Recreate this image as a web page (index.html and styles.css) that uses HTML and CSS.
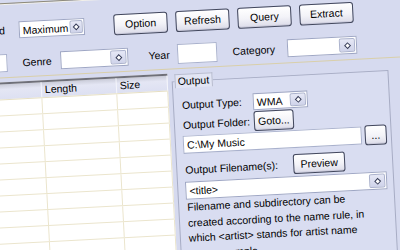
FILE: index.html
```html
<!DOCTYPE html>
<html lang="en">
<head>
  <meta charset="UTF-8" />
  <title>Audio Extractor</title>
  <link rel="stylesheet" href="styles.css">
</head>
<body>
  <div class="stage">
    <div class="toolbar">
      <div class="tool-row row-top">
        <span class="label label-speed">Speed</span>
        <div class="combo combo-quality">
          <span class="combo-text">Maximum</span>
          <span class="drop"><i></i></span>
        </div>
        <div class="buttons">
          <button class="btn btn-tool">Option</button>
          <button class="btn btn-tool">Refresh</button>
          <button class="btn btn-tool">Query</button>
          <button class="btn btn-tool">Extract</button>
        </div>
      </div>
      <div class="tool-row row-filter">
        <div class="textbox tb-artist"></div>
        <span class="label label-genre">Genre</span>
        <div class="combo combo-genre">
          <span class="combo-text"></span>
          <span class="drop"><i></i></span>
        </div>
        <span class="label label-year">Year</span>
        <div class="textbox tb-year"></div>
        <span class="label label-category">Category</span>
        <div class="combo combo-category">
          <span class="combo-text"></span>
          <span class="drop"><i></i></span>
        </div>
      </div>
    </div>

    <div class="main">
      <div class="list">
        <div class="list-head">
          <span class="cell col-title"></span>
          <span class="cell col-length">Length</span>
          <span class="cell col-size">Size</span>
        </div>
        <div class="list-body">
          <div class="list-row"><span class="cell col-title"></span><span class="cell col-length"></span><span class="cell col-size"></span></div>
          <div class="list-row"><span class="cell col-title"></span><span class="cell col-length"></span><span class="cell col-size"></span></div>
          <div class="list-row"><span class="cell col-title"></span><span class="cell col-length"></span><span class="cell col-size"></span></div>
          <div class="list-row"><span class="cell col-title"></span><span class="cell col-length"></span><span class="cell col-size"></span></div>
          <div class="list-row"><span class="cell col-title"></span><span class="cell col-length"></span><span class="cell col-size"></span></div>
          <div class="list-row"><span class="cell col-title"></span><span class="cell col-length"></span><span class="cell col-size"></span></div>
          <div class="list-row"><span class="cell col-title"></span><span class="cell col-length"></span><span class="cell col-size"></span></div>
          <div class="list-row"><span class="cell col-title"></span><span class="cell col-length"></span><span class="cell col-size"></span></div>
          <div class="list-row"><span class="cell col-title"></span><span class="cell col-length"></span><span class="cell col-size"></span></div>
          <div class="list-row"><span class="cell col-title"></span><span class="cell col-length"></span><span class="cell col-size"></span></div>
          <div class="list-row"><span class="cell col-title"></span><span class="cell col-length"></span><span class="cell col-size"></span></div>
          <div class="list-row"><span class="cell col-title"></span><span class="cell col-length"></span><span class="cell col-size"></span></div>
        </div>
      </div>

      <div class="group">
        <div class="legend">Output</div>
        <div class="field field-type">
          <span class="field-label">Output Type:</span>
          <div class="combo combo-type">
            <span class="combo-text">WMA</span>
            <span class="drop"><i></i></span>
          </div>
        </div>
        <div class="field field-folder">
          <span class="field-label">Output Folder:</span>
          <button class="btn btn-goto">Goto...</button>
        </div>
        <div class="field field-path">
          <div class="textbox tb-path">C:\My Music</div>
          <button class="btn btn-browse">...</button>
        </div>
        <div class="field field-name">
          <span class="field-label label-name">Output Filename(s):</span>
          <button class="btn btn-preview">Preview</button>
        </div>
        <div class="combo combo-name">
          <span class="combo-text">&lt;title&gt;</span>
          <span class="drop"><i></i></span>
        </div>
        <p class="hint">Filename and subdirectory can be<br>created according to the name rule, in<br>which &lt;artist&gt; stands for artist name<br>as an example.</p>
      </div>
    </div>
  </div>
</body>
</html>
```

FILE: styles.css
```css
html, body {
  margin: 0;
  padding: 0;
  overflow: hidden;
  background: #d6daef;
  color: #000;
  font-family: "Liberation Sans", Arial, sans-serif;
  font-size: 10.5px;
}

/* the whole window is photographed slightly tilted */
.stage {
  width: 460px;
  height: 320px;
  margin: -30px 0 0 -30px;
  padding: 30px;
  box-sizing: border-box;
  transform: rotate(-3deg);
  transform-origin: 230px 155px;
}

.toolbar {
  display: flex;
  flex-direction: column;
  gap: 8px;
  margin: -7px -30px 0;
  padding: 11px 0 4px;
  border-top: 1px solid #8d8978;
  border-bottom: 1px solid #d9cfa9;
  box-shadow: inset 0 1px 0 #f3f1ea;
}

.tool-row {
  display: flex;
  align-items: center;
}

.row-top {
  height: 30px;
}

.row-filter {
  height: 20px;
}

.label {
  white-space: nowrap;
}

.label-speed {
  width: 40px;
  margin-right: 3px;
  text-align: right;
}

.label-genre {
  margin-left: 15px;
}

.label-year {
  margin-left: 20px;
}

.label-category {
  margin-left: 15px;
}

/* combo boxes */
.combo {
  display: flex;
  align-items: stretch;
  height: 18px;
  box-sizing: border-box;
  background: #fff;
  border: 1px solid #9ea6c4;
}

.combo-text {
  flex: 1;
  padding-left: 3px;
  line-height: 16px;
  white-space: nowrap;
}

.drop {
  display: flex;
  align-items: center;
  justify-content: center;
  width: 14px;
  margin: 1px;
  border: 1px solid #aab1cc;
  border-radius: 2px;
  background: linear-gradient(#e6e8f6, #cfd3ea);
}

.drop i {
  width: 3px;
  height: 3px;
  border: 1px solid #343a58;
  background: #fff;
  transform: rotate(45deg);
}

.combo-quality {
  width: 66px;
  height: 17px;
  margin-left: 11px;
}

.combo-genre {
  width: 68px;
  margin-left: 9px;
}

.combo-category {
  width: 70px;
  margin-left: 12px;
}

.combo-type {
  width: 55px;
  height: 17px;
}

.combo-name {
  width: 202px;
  margin-top: 2px;
}

/* text boxes */
.textbox {
  height: 18px;
  box-sizing: border-box;
  background: #fff;
  border: 1px solid #a9b1cd;
  padding-left: 3px;
  line-height: 16px;
}

.tb-artist {
  width: 41px;
}

.tb-year {
  width: 40px;
  height: 20px;
  margin-left: 8px;
}

.tb-path {
  width: 179px;
  margin-right: 3px;
}

/* push buttons */
.btn {
  height: 21px;
  padding: 0;
  font: inherit;
  color: #000;
  border: 1px solid #42475c;
  border-radius: 3px;
  background: linear-gradient(#ffffff, #f3f3f8 55%, #dcdce9);
  box-shadow: inset 0 -1px 0 #c9c9da;
}

.buttons {
  display: flex;
  gap: 8px;
  margin-left: 29px;
}

.btn-tool {
  width: 54px;
}

.btn-goto {
  width: 40px;
  height: 20px;
}

.btn-browse {
  width: 22px;
  height: 20px;
}

.btn-preview {
  width: 52px;
  height: 20px;
}

/* track list and output panel */
.main {
  display: flex;
  align-items: flex-start;
  margin-left: -30px;
}

.list {
  width: 200px;
  margin-top: 4px;
  background: #fff;
}

.list-head {
  display: flex;
  height: 18px;
  box-sizing: border-box;
  border-top: 2px solid #6f7079;
  border-bottom: 1px solid #e6dfc3;
  background: linear-gradient(#c9cbd8, #e4e6f4 35%, #dde0f2);
}

.list-head .cell {
  line-height: 15px;
  padding-left: 3px;
  border-right: 1px solid #f4f5fb;
}

.list-row {
  display: flex;
  height: 16px;
  box-sizing: border-box;
  border-bottom: 1px solid #ebe5cd;
}

.list-row .cell {
  border-right: 1px solid #ebe5cd;
}

.cell {
  box-sizing: border-box;
}

.col-title {
  width: 74px;
}

.col-length {
  width: 75px;
}

.col-size {
  flex: 1;
}

.group {
  width: 217px;
  height: 220px;
  margin: 12px 0 0 4px;
  padding: 0 4px 0 7px;
  box-sizing: border-box;
  border: 1px solid #a7acc4;
  background: #d9ddf1;
}

.legend {
  width: max-content;
  height: 13px;
  margin: -8px 0 0 -5px;
  padding: 0 2px;
  line-height: 13px;
  border: 1px solid #b8bccf;
  border-bottom: none;
  background: #e2e5f4;
}

.field {
  display: flex;
  align-items: center;
}

.field-type {
  height: 18px;
  margin-top: 8px;
}

.field-folder {
  height: 20px;
  margin-top: 1px;
}

.field-path {
  height: 20px;
}

.field-name {
  height: 20px;
  margin-top: 5px;
}

.field-label {
  width: 72px;
  padding-left: 1px;
  box-sizing: border-box;
  white-space: nowrap;
}

.label-name {
  width: 109px;
}

.hint {
  margin: 0;
  padding-left: 1px;
  line-height: 15.5px;
  white-space: nowrap;
}
```
